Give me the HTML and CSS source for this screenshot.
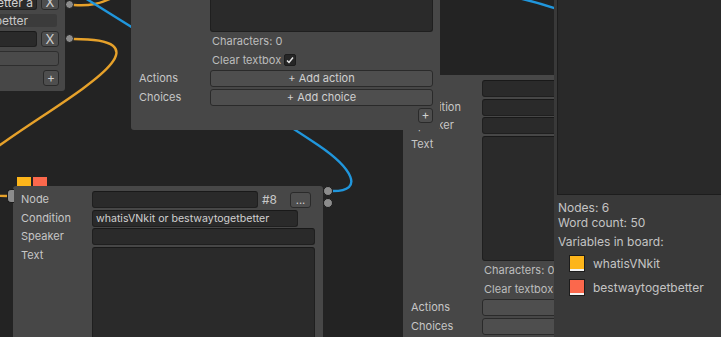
FILE: index.html
```html
<!DOCTYPE html>
<html lang="en">
<head>
  <meta charset="UTF-8">
  <title>VNkit Board</title>
  <link rel="stylesheet" href="styles.css">
</head>
<body>

  <div class="board">
    <svg class="wires" width="554" height="337" viewBox="0 0 554 337">
      <path class="wire orange" d="M74,5 C90,6 100,4 114,-3"/>
      <path class="wire orange" d="M74,39 C244,39 -163,196 7,196"/>
      <path class="wire blue" d="M333,191 C365,191 352,168 318,145 C260,106 160,45 85,-2"/>
      <path class="wire blue" d="M518,-2 Q540,3 560,10"/>
    </svg>

    <!-- choice node, mostly off screen -->
    <div class="node choice-node">
      <div class="choice-row">
        <div class="field scroll-end">whatisVNkit and bestwaytogetbetter a</div>
        <button class="btn btn-x">X</button>
      </div>
      <div class="choice-cond">bestwaytogetbetter</div>
      <div class="choice-row">
        <div class="field"></div>
        <button class="btn btn-x">X</button>
      </div>
      <div class="btn choice-add"></div>
      <div class="node-foot"><button class="btn btn-small">+</button></div>
      <span class="port port-out first"></span>
      <span class="port port-out second"></span>
    </div>

    <!-- dialogue node under the middle one -->
    <div class="node dialog-node right-node">
      <div class="rows">
        <span class="label">Node</span>
        <div class="field"></div>
        <span class="label">Condition</span>
        <div class="field"></div>
        <span class="label">Speaker</span>
        <div class="field"></div>
        <span class="label">Text</span>
        <div class="field textbox"></div>
        <span></span>
        <span class="note">Characters: 0</span>
        <span></span>
        <span class="note">Clear textbox</span>
        <span class="label">Actions</span>
        <button class="btn">+ Add action</button>
        <span class="label">Choices</span>
        <button class="btn">+ Add choice</button>
      </div>
    </div>

    <div class="node dialog-node middle-node">
      <div class="rows">
        <span class="label">Node</span>
        <div class="field"></div>
        <span class="label">Condition</span>
        <div class="field"></div>
        <span class="label">Speaker</span>
        <div class="field"></div>
        <span class="label">Text</span>
        <div class="field textbox"></div>
        <span></span>
        <span class="note">Characters: 0</span>
        <span></span>
        <span class="note check-row">Clear textbox
          <span class="checkbox">
            <svg width="10" height="10" viewBox="0 0 10 10"><polyline points="2,5.5 4,7.5 8,2.5"/></svg>
          </span>
        </span>
        <span class="label">Actions</span>
        <button class="btn">+ Add action</button>
        <span class="label">Choices</span>
        <button class="btn">+ Add choice</button>
      </div>
      <div class="node-foot"><button class="btn btn-small">+</button></div>
    </div>

    <div class="node dialog-node bottom-node">
      <div class="tags">
        <span class="tag yellow"></span>
        <span class="tag red"></span>
      </div>
      <span class="port port-in"></span>
      <span class="port port-out first"></span>
      <span class="port port-out second"></span>
      <div class="rows">
        <span class="label">Node</span>
        <div class="node-id">
          <div class="field"></div>
          <span class="id">#8</span>
          <button class="btn btn-dots">...</button>
        </div>
        <span class="label">Condition</span>
        <div class="field cond">whatisVNkit or bestwaytogetbetter</div>
        <span class="label">Speaker</span>
        <div class="field"></div>
        <span class="label">Text</span>
        <div class="field textbox"></div>
      </div>
    </div>
  </div>

  <aside class="sidebar">
    <div class="preview"></div>
    <div class="stats">
      <div>Nodes: 6</div>
      <div>Word count: 50</div>
      <div class="vars-title">Variables in board:</div>
      <ul class="vars">
        <li><span class="swatch yellow"></span>whatisVNkit</li>
        <li><span class="swatch red"></span>bestwaytogetbetter</li>
      </ul>
    </div>
  </aside>

</body>
</html>
```

FILE: styles.css
```css
* {
  box-sizing: border-box;
}

body {
  margin: 0;
  width: 721px;
  height: 337px;
  display: flex;
  overflow: hidden;
  background: #232323;
  font-family: Inter, "Noto Sans", sans-serif;
  font-size: 11px;
  color: #c6c6c6;
}

.board {
  position: relative;
  flex: 0 0 554px;
  overflow: hidden;
  background: #232323;
}

.wires {
  position: absolute;
  left: 0;
  top: 0;
}

.wire {
  fill: none;
  stroke-width: 2.4;
  stroke-linecap: round;
}

.wire.orange {
  stroke: #e6a12a;
}

.wire.blue {
  stroke: #2096dc;
}

/* nodes */

.node {
  position: absolute;
  background: #474747;
  border-radius: 3px;
}

.field {
  height: 17px;
  background: #2a2a2a;
  border: 1px solid #1f1f1f;
  border-top-color: #191919;
  border-radius: 3px;
  padding: 0 3px;
  line-height: 15px;
  color: #d0d0d0;
  white-space: nowrap;
  overflow: hidden;
}

.btn {
  height: 17px;
  padding: 0;
  background: #4e4e4e;
  border: 1px solid #2a2a2a;
  border-radius: 3px;
  font: inherit;
  line-height: 15px;
  color: #d0d0d0;
  text-align: center;
}

.label,
.note {
  line-height: 17px;
  white-space: nowrap;
}

.note {
  color: #bdbdbd;
  padding-left: 2px;
}

.rows {
  display: grid;
  grid-template-columns: 71px 1fr;
  row-gap: 1.5px;
}

.dialog-node {
  width: 310px;
  padding: 5px 7px 7px 8px;
}

.textbox {
  height: 125px;
}

.check-row {
  display: flex;
  align-items: center;
  gap: 3px;
}

.checkbox {
  width: 12px;
  height: 12px;
  display: flex;
  align-items: center;
  justify-content: center;
  background: #262626;
  border: 1px solid #1c1c1c;
  border-radius: 2px;
}

.checkbox polyline {
  fill: none;
  stroke: #e6e6e6;
  stroke-width: 1.5;
}

.node-foot {
  display: flex;
  justify-content: flex-end;
  margin-top: 2px;
}

.btn-small {
  width: 15px;
  height: 15px;
  line-height: 12px;
  font-size: 12px;
}

.middle-node {
  left: 131px;
  top: -154px;
  width: 309px;
}

.right-node {
  left: 403px;
  top: 75px;
}

.bottom-node {
  left: 13px;
  top: 186px;
  height: 200px;
  padding-right: 8px;
}

.node-id {
  display: flex;
  align-items: center;
}

.node-id .field {
  flex: 1;
  margin-right: 4px;
}

.id {
  width: 28px;
  font-size: 12px;
  color: #c8c8c8;
}

.btn-dots {
  width: 21px;
  height: 16px;
  margin-right: 4px;
  line-height: 10px;
}

.cond {
  width: 206px;
  font-size: 10.6px;
}

.tags {
  position: absolute;
  top: -9px;
  left: 4px;
  display: flex;
  gap: 2px;
}

.tag {
  width: 14px;
  height: 9px;
}

.yellow {
  background: #fdb51a;
}

.red {
  background: #fb684c;
}

/* ports sit on the node edge */

.port {
  position: absolute;
  width: 10px;
  height: 10px;
  background: #8c8c8c;
  border: 1px solid #1b1b1b;
  border-radius: 50%;
}

.port-out {
  right: -10px;
}

.bottom-node .port-out.first {
  top: 0;
}

.bottom-node .port-out.second {
  top: 12px;
}

.port-in {
  left: -6px;
  top: 3px;
  width: 7px;
  height: 14px;
  border-radius: 4px 0 0 4px;
  border-right: none;
}

/* choice node */

.choice-node {
  left: -150px;
  top: -20px;
  width: 215px;
  height: 111px;
  padding: 14px 6px 5px 0;
  display: flex;
  flex-direction: column;
  gap: 4px;
}

.choice-row {
  display: flex;
  gap: 4px;
}

.choice-row .field {
  flex: 1;
  height: 16px;
}

.scroll-end {
  display: flex;
  justify-content: flex-end;
  font-size: 12px;
}

.btn-x {
  width: 18px;
  height: 16px;
  font-size: 13px;
  line-height: 14px;
}

.choice-cond {
  height: 13px;
  margin-right: 2px;
  background: #3b3b3b;
  border-radius: 2px;
  padding-right: 29px;
  text-align: right;
  font-size: 12px;
  line-height: 13px;
  color: #c8c8c8;
  white-space: nowrap;
  overflow: hidden;
}

.choice-add {
  height: 15px;
  background: #4a4a4a;
  border-color: #2e2e2e;
}

.choice-node .node-foot {
  margin-top: 0;
}

.choice-node .btn-small {
  width: 16px;
  height: 16px;
}

.choice-node .port-out {
  right: -9px;
  width: 9px;
  height: 9px;
}

.choice-node .port-out.first {
  top: 20px;
}

.choice-node .port-out.second {
  top: 54px;
}

/* sidebar */

.sidebar {
  flex: 0 0 167px;
  background: #393939;
  padding-left: 3px;
  display: flex;
  flex-direction: column;
  font-size: 12px;
}

.preview {
  height: 195px;
  background: #292929;
  border: 1px solid #1d1d1d;
  border-top: none;
  border-right: none;
}

.stats {
  padding: 5px 0 0 1px;
  line-height: 15px;
  color: #c4c4c4;
}

.vars-title {
  margin-top: 4px;
}

.vars {
  list-style: none;
  margin: 2px 0 0;
  padding: 0 0 0 11px;
}

.vars li {
  height: 24px;
  display: flex;
  align-items: center;
  gap: 8px;
}

.swatch {
  width: 16px;
  height: 17px;
  border: 1px solid #1c1c1c;
  box-shadow: inset 0 -2px 0 #f2f2f2;
}
```
